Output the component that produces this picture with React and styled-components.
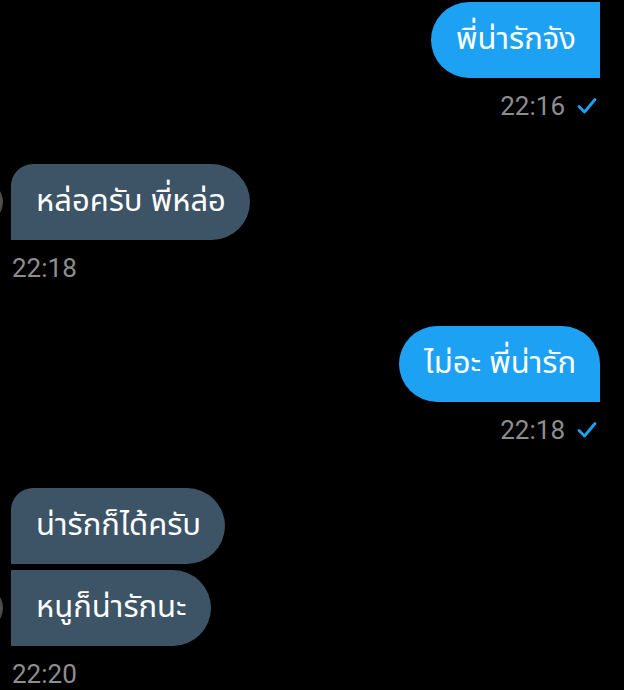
import React from 'react';
import styled, { createGlobalStyle } from 'styled-components';

const GlobalStyle = createGlobalStyle`
  html, body {
    margin: 0;
    padding: 0;
    background: #000;
  }
  body {
    font-family: "Noto Sans Thai", "Noto Sans", Roboto, sans-serif;
  }
`;

const Thread = styled.div`
  width: 624px;
  height: 690px;
  overflow: hidden;
  background: #000;
  padding: 2px 24px 0 11px;
  box-sizing: border-box;
  display: flex;
  flex-direction: column;
  gap: 43px;
`;

const Group = styled.div`
  display: flex;
  flex-direction: column;
  align-items: ${(p) => (p.$out ? 'flex-end' : 'flex-start')};
`;

const Row = styled.div`
  display: flex;
  align-items: flex-end;
`;

const Avatar = styled.div`
  width: 44px;
  height: 44px;
  border-radius: 50%;
  margin: 0 8px 16px -52px;
  background: radial-gradient(circle at 85% 50%, #5e5650 0%, #36302c 45%, #141210 100%);
  flex-shrink: 0;
`;

const Stack = styled.div`
  display: flex;
  flex-direction: column;
  align-items: ${(p) => (p.$out ? 'flex-end' : 'flex-start')};
  gap: 6px;
`;

const Bubble = styled.div`
  height: 76px;
  box-sizing: border-box;
  padding: 0 24px 0 25px;
  display: flex;
  align-items: center;
  font-size: 31px;
  line-height: 40px;
  color: #fff;
  white-space: nowrap;
  background: ${(p) => (p.$out ? '#1da1f2' : '#3d5466')};
  border-radius: ${(p) => p.$radius};
`;

const Meta = styled.div`
  margin-top: 13px;
  height: 30px;
  display: flex;
  align-items: center;
  gap: 12px;
  font-family: Roboto, "Liberation Sans", sans-serif;
  font-size: 26px;
  color: #8e8e8e;
  padding-left: ${(p) => (p.$out ? '0' : '1px')};
  padding-right: ${(p) => (p.$out ? '3px' : '0')};
`;

const Check = () => (
  <svg width="20" height="18" viewBox="0 0 20 18" fill="none">
    <path d="M2 9.5 L7.5 15 L18 2.5" stroke="#1da1f2" strokeWidth="2.8" strokeLinecap="round" strokeLinejoin="round" />
  </svg>
);

const OUT_FIRST = '38px 0 0 38px';
const OUT_LAST = '38px 38px 0 38px';
const IN_FIRST = '22px 38px 38px 0';
const IN_NEXT = '0 38px 38px 0';

const groups = [
  { out: true, time: '22:16', bubbles: [{ text: 'พี่น่ารักจัง', r: OUT_FIRST }] },
  { out: false, time: '22:18', bubbles: [{ text: 'หล่อครับ พี่หล่อ', r: IN_FIRST }] },
  { out: true, time: '22:18', bubbles: [{ text: 'ไม่อะ พี่น่ารัก', r: OUT_LAST }] },
  {
    out: false,
    time: '22:20',
    bubbles: [
      { text: 'น่ารักก็ได้ครับ', r: IN_FIRST },
      { text: 'หนูก็น่ารักนะ', r: IN_NEXT },
    ],
  },
];

const App = () => (
  <>
    <GlobalStyle />
    <Thread>
      {groups.map((g, i) => (
        <Group key={i} $out={g.out}>
          <Row>
            {!g.out && <Avatar />}
            <Stack $out={g.out}>
              {g.bubbles.map((b, j) => (
                <Bubble key={j} $out={g.out} $radius={b.r}>
                  {b.text}
                </Bubble>
              ))}
            </Stack>
          </Row>
          <Meta $out={g.out}>
            {g.time}
            {g.out && <Check />}
          </Meta>
        </Group>
      ))}
    </Thread>
  </>
);

export default App;
